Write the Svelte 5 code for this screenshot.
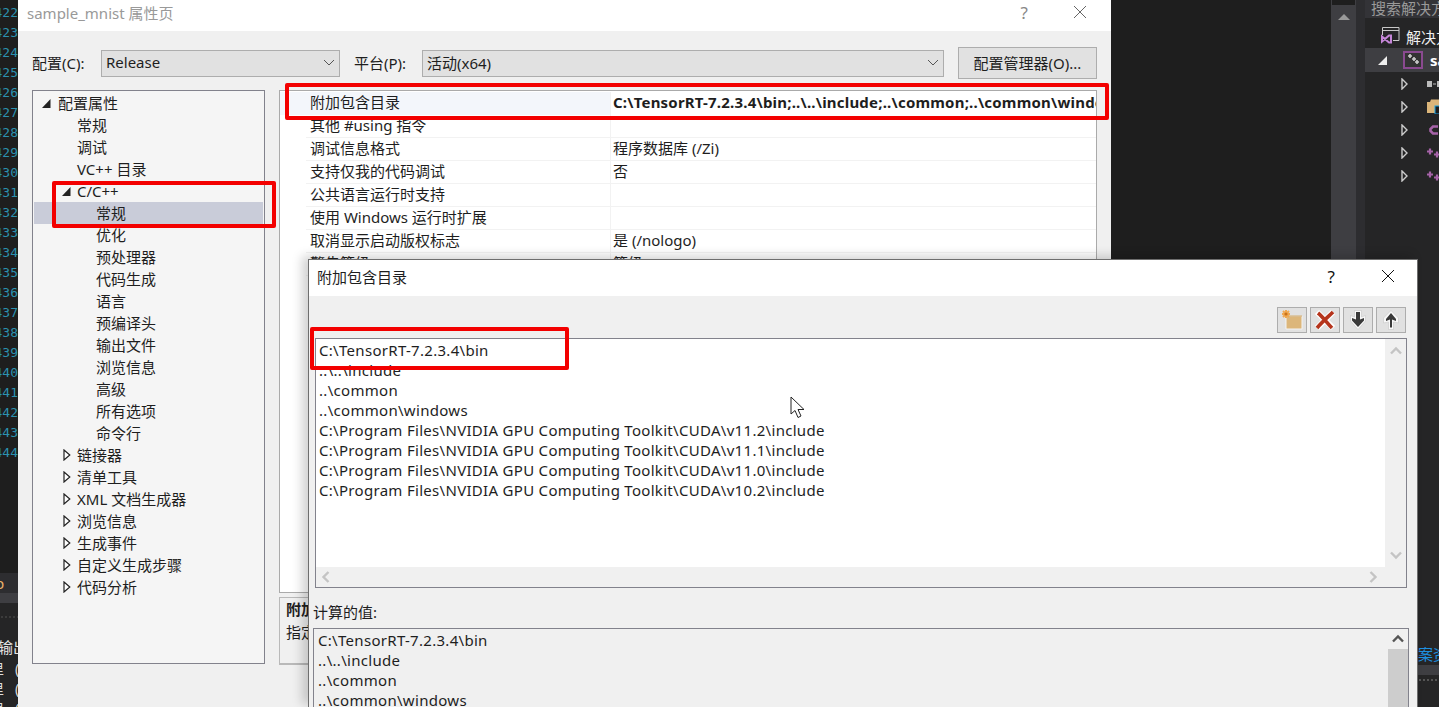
<script lang="ts">
  const lineNumbers = Array.from({ length: 23 }, (_, i) => 422 + i)

  const tree = [
    { label: '配置属性', depth: 0, arrow: 'open' },
    { label: '常规', depth: 1 },
    { label: '调试', depth: 1 },
    { label: 'VC++ 目录', depth: 1 },
    { label: 'C/C++', depth: 1, arrow: 'open' },
    { label: '常规', depth: 2, selected: true },
    { label: '优化', depth: 2 },
    { label: '预处理器', depth: 2 },
    { label: '代码生成', depth: 2 },
    { label: '语言', depth: 2 },
    { label: '预编译头', depth: 2 },
    { label: '输出文件', depth: 2 },
    { label: '浏览信息', depth: 2 },
    { label: '高级', depth: 2 },
    { label: '所有选项', depth: 2 },
    { label: '命令行', depth: 2 },
    { label: '链接器', depth: 1, arrow: 'closed' },
    { label: '清单工具', depth: 1, arrow: 'closed' },
    { label: 'XML 文档生成器', depth: 1, arrow: 'closed' },
    { label: '浏览信息', depth: 1, arrow: 'closed' },
    { label: '生成事件', depth: 1, arrow: 'closed' },
    { label: '自定义生成步骤', depth: 1, arrow: 'closed' },
    { label: '代码分析', depth: 1, arrow: 'closed' }
  ]

  const props = [
    ['附加包含目录', 'C:\\TensorRT-7.2.3.4\\bin;..\\..\\include;..\\common;..\\common\\windows;C:\\Program Files'],
    ['其他 #using 指令', ''],
    ['调试信息格式', '程序数据库 (/Zi)'],
    ['支持仅我的代码调试', '否'],
    ['公共语言运行时支持', ''],
    ['使用 Windows 运行时扩展', ''],
    ['取消显示启动版权标志', '是 (/nologo)'],
    ['警告等级', '等级']
  ]

  const dirs = [
    'C:\\TensorRT-7.2.3.4\\bin',
    '..\\..\\include',
    '..\\common',
    '..\\common\\windows',
    'C:\\Program Files\\NVIDIA GPU Computing Toolkit\\CUDA\\v11.2\\include',
    'C:\\Program Files\\NVIDIA GPU Computing Toolkit\\CUDA\\v11.1\\include',
    'C:\\Program Files\\NVIDIA GPU Computing Toolkit\\CUDA\\v11.0\\include',
    'C:\\Program Files\\NVIDIA GPU Computing Toolkit\\CUDA\\v10.2\\include'
  ]

  const explorerArrows = [0, 1, 2, 3, 4]
</script>

{#snippet chevron(dir, color)}
  <svg class="chev" width="14" height="10" viewBox="0 0 14 10" style="transform: rotate({dir}deg)">
    <path d="M2 7.5 L7 2.5 L12 7.5" fill="none" stroke={color} stroke-width="2.4" />
  </svg>
{/snippet}

<div class="desktop">
  <!-- editor gutter behind the window -->
  <div class="gutter">
    {#each lineNumbers as n}<div>{n}</div>{/each}
  </div>

  <div class="output">
    <div class="out-tab">p</div>
    <div class="out-bar"></div>
    <div class="out-dots"></div>
    <div class="out-title">输出</div>
    <div class="out-line">里&nbsp;&nbsp;&nbsp;(</div>
    <div class="out-line">里&nbsp;&nbsp;&nbsp;(</div>
    <div class="out-line">里&nbsp;&nbsp;&nbsp;(</div>
  </div>

  <!-- solution explorer on the right -->
  <div class="scrollbar">
    <div class="scroll-thumb"></div>
    <svg width="12" height="7" viewBox="0 0 12 7"><path d="M6 0 L12 6 H0 Z" fill="#999" /></svg>
  </div>
  <div class="explorer">
    <div class="search">搜索解决方案资源管理器</div>
    <div class="ex-row">
      <svg width="19" height="18" viewBox="0 0 19 18">
        <path d="M1.5 8 V0.5 H18 V13.5 H12 M1.5 3.5 H18" fill="none" stroke="#c8c8c8" stroke-width="1" />
        <path d="M1 9.5 L8 15.5 H10 V8.5 H8 L1 14.5 Z" fill="none" stroke="#c586d8" stroke-width="2" />
      </svg>
      <span>解决方案</span>
    </div>
    <div class="ex-row project">
      <svg width="9" height="9" viewBox="0 0 9 9"><path d="M9 0 V9 H0 Z" fill="#eee" /></svg>
      <svg class="proj" width="20" height="18" viewBox="0 0 20 18">
        <rect x="1" y="1" width="18" height="16" fill="#333" stroke="#8a4a90" stroke-width="2" />
        <path d="M5 5 H9 M7 3 V7 M9 8 H13 M11 6 V10 M12 11 H16 M14 9 V13" stroke="#ccc" stroke-width="1.6" />
      </svg>
      <b>sample_mnist</b>
    </div>
    {#each explorerArrows as i}
      <div class="ex-child">
        <svg class="ex-arrow" width="7" height="12" viewBox="0 0 7 12"><path d="M1 1 L6 6 L1 11 Z" fill="none" stroke="#ccc" stroke-width="1.4" /></svg>
        {#if i === 0}
          <svg width="16" height="8" viewBox="0 0 16 8"><rect x="0" y="1" width="5" height="6" fill="#bbb" /><rect x="6" y="3.5" width="3" height="1" fill="#bbb" /><rect x="10" y="1" width="5" height="6" fill="#bbb" /></svg>
        {:else if i === 1}
          <svg width="16" height="15" viewBox="0 0 16 15"><path d="M0 3 H3 L4 0.5 H12 L13 3 V14 H0 Z" fill="#dcb67a" /><rect x="8" y="7" width="8" height="8" fill="#1e1e1e" stroke="#1ba1e2" /></svg>
        {:else if i === 2}
          <svg class="icon-c" width="12" height="12" viewBox="0 0 12 12"><path d="M10 2.5 H5 L2.5 5 V7 L5 9.5 H10" fill="none" stroke="#a663a8" stroke-width="2.6" /></svg>
        {:else}
          <svg width="14" height="10" viewBox="0 0 14 10"><path d="M0 3.5 H6 M3 0.5 V6.5 M7 6.5 H13 M10 3.5 V9.5" stroke="#a663a8" stroke-width="2.2" /></svg>
        {/if}
      </div>
    {/each}
  </div>
  <div class="corner-text">案资</div>
  <div class="corner-bar"></div>
  <div class="corner-dots"></div>

  <!-- property pages window -->
  <div class="window main">
    <div class="titlebar">
      <span class="title">sample_mnist 属性页</span>
      <span class="help">?</span>
      <svg class="close" width="14" height="14" viewBox="0 0 14 14"><path d="M1 1 L13 13 M13 1 L1 13" stroke="#666" stroke-width="1" /></svg>
    </div>
    <div class="body">
      <div class="toolbar">
        <label class="config-label" for="cfg">配置(C):</label>
        <div class="select cfg" id="cfg">
          <span>Release</span>
          <svg width="12" height="7" viewBox="0 0 12 7"><path d="M1 1 L6 6 L11 1" fill="none" stroke="#555" /></svg>
        </div>
        <label class="platform-label" for="plat">平台(P):</label>
        <div class="select plat" id="plat">
          <span>活动(x64)</span>
          <svg width="12" height="7" viewBox="0 0 12 7"><path d="M1 1 L6 6 L11 1" fill="none" stroke="#555" /></svg>
        </div>
        <button class="manager">配置管理器(O)...</button>
      </div>

      <div class="panes">
        <div class="tree">
          {#each tree as item}
            <div class="tree-row depth{item.depth}" class:selected={item.selected}>
              {#if item.arrow === 'open'}
                <svg class="arrow" width="9" height="9" viewBox="0 0 9 9"><path d="M8.5 0 V9 H0 Z" fill="#222" /></svg>
              {:else if item.arrow === 'closed'}
                <svg class="arrow closed" width="8" height="12" viewBox="0 0 8 12"><path d="M1 1 L6.8 6 L1 11 Z" fill="#fff" stroke="#222" stroke-width="1.2" /></svg>
              {/if}
              <span>{item.label}</span>
            </div>
          {/each}
        </div>

        <div class="right">
          <div class="grid">
            {#each props as p, i}
              <div class="prop" class:active={i === 0}>
                <div class="name">{p[0]}</div>
                <div class="value" class:bold={i === 0}>{p[1]}</div>
              </div>
            {/each}
          </div>
          <div class="desc">
            <b>附加包含目录</b>
            <div>指定一个或多个要添加到包含路径中的目录</div>
          </div>
        </div>
      </div>
    </div>
  </div>

  <!-- red annotation frames -->
  <div class="mark mark-a"></div>
  <div class="mark mark-b"></div>

  <!-- include directories dialog -->
  <div class="window dialog">
    <div class="dlg-title">
      <span>附加包含目录</span>
      <span class="help">?</span>
      <svg class="close" width="14" height="14" viewBox="0 0 14 14"><path d="M1 1 L13 13 M13 1 L1 13" stroke="#111" stroke-width="1" /></svg>
    </div>
    <div class="dlg-body">
      <div class="dlg-tools">
        <div class="tool">
          <svg width="24" height="22" viewBox="0 0 24 22">
            <path d="M6 7 H22 V20 H6 Z" fill="#dcb67a" stroke="#f4f4f4" />
            <path d="M6 7 H22" stroke="#c9a263" />
            <path d="M6 1 V9 M2 5 H10 M3 2 L9 8 M9 2 L3 8" stroke="#f0a850" stroke-width="2" />
            <circle cx="6" cy="5" r="1.6" fill="#c9721a" />
          </svg>
        </div>
        <div class="tool">
          <svg width="24" height="22" viewBox="0 0 24 22">
            <path d="M4 3 L20 19 M20 3 L4 19" stroke="#fff" stroke-width="6" />
            <path d="M5 4 C10 8 14 14 19 19 M20 3 C15 8 9 13 4 19" fill="none" stroke="#b5341c" stroke-width="3.6" />
          </svg>
        </div>
        <div class="tool">
          <svg width="18" height="20" viewBox="0 0 18 20">
            <path d="M5.5 0.5 H12.5 V7 L16.5 5.5 V11 L9 19.5 L1.5 11 V5.5 L5.5 7 Z" fill="#f8f8f8" stroke="#c8c8c8" stroke-width="0.6" />
            <path d="M7 2 H11 V9.5 L15 8 V10.5 L9 17 L3 10.5 V8 L7 9.5 Z" fill="#3a3a3a" />
          </svg>
        </div>
        <div class="tool">
          <svg width="18" height="20" viewBox="0 0 18 20">
            <path d="M6.5 19.5 H11.5 V12 L16.5 13 V8 L9 0.5 L1.5 8 V13 L6.5 12 Z" fill="#f8f8f8" stroke="#c8c8c8" stroke-width="0.6" />
            <path d="M8 17.5 H10 V9.5 L14 11 V9 L9 3 L4 9 V11 L8 9.5 Z" fill="#3a3a3a" />
          </svg>
        </div>
      </div>

      <div class="listbox">
        <div class="list-main">
          <div class="list-text">
            {#each dirs as d}<div class="line">{d}</div>{/each}
          </div>
          <div class="vbar">
            {@render chevron(0, '#c4c4c4')}
            {@render chevron(180, '#c4c4c4')}
          </div>
        </div>
        <div class="hbar">
          {@render chevron(-90, '#c4c4c4')}
          {@render chevron(90, '#c4c4c4')}
        </div>
      </div>

      <div class="computed-label">计算的值:</div>
      <div class="computed">
        <div class="computed-text">
          {#each dirs.slice(0, 4) as d}<div class="line">{d}</div>{/each}
        </div>
        <div class="vbar2">
          <div class="vbar2-btn">{@render chevron(0, '#555')}</div>
          <div class="vbar2-thumb"></div>
        </div>
      </div>
    </div>
  </div>

  <div class="mark mark-c"></div>

  <!-- mouse pointer -->
  <svg class="cursor" width="16" height="24" viewBox="0 0 16 24">
    <path d="M1 1 V18 L5 14.5 L8 21.5 L11 20 L8 13.5 L14 13.5 Z" fill="#fff" stroke="#222" stroke-width="1" />
  </svg>
</div>

<style>
  :global(body) {
    margin: 0;
    background: #1e1e1e;
  }
  .desktop {
    position: relative;
    width: 1439px;
    height: 707px;
    overflow: hidden;
    background: #1e1e1e;
    font-family: "Noto Sans", "Noto Sans CJK SC", sans-serif;
    font-size: 15px;
    color: #1e1e1e;
  }

  .gutter {
    position: absolute;
    left: 0;
    top: 3px;
    width: 18px;
    font-family: "DejaVu Sans Mono", monospace;
    font-size: 13px;
    line-height: 20px;
    color: #2b91af;
    direction: rtl;
    white-space: nowrap;
    text-align: left;
  }

  .output {
    position: absolute;
    left: 0;
    top: 573px;
    width: 18px;
    height: 134px;
    overflow: hidden;
    color: #ddd;
    background: #252526;
    white-space: nowrap;
  }
  .out-tab { height: 20px; line-height: 20px; background: #2d2d30; margin-left: -6px; padding-left: 1px; color: #e8b06a; }
  .out-bar { height: 10px; background: #3e3e42; }
  .out-dots {
    height: 30px;
    background-image: radial-gradient(#555 0.6px, transparent 0.8px);
    background-size: 4px 4px;
    background-position: 8px 12px;
    background-repeat: repeat-x;
  }
  .out-title { height: 26px; line-height: 28px; margin-left: -2px; color: #e4e4e4; }
  .out-line { height: 20px; line-height: 20px; margin-left: -10px; font-size: 14px; }

  .scrollbar {
    position: absolute;
    left: 1331px;
    top: 0;
    width: 25px;
    height: 707px;
    background: #3e3e42;
    text-align: center;
  }
  .scroll-thumb { height: 5px; background: #1e1e1e; margin: 0 1px 9px; }
  .scrollbar svg { display: block; margin: 0 auto; }

  .explorer {
    position: absolute;
    left: 1356px;
    top: 0;
    width: 83px;
    height: 707px;
    background: #252526;
    border-left: 9px solid #2d2d30;
    box-sizing: border-box;
    overflow: hidden;
    color: #ddd;
    white-space: nowrap;
  }
  .explorer svg { flex: none; }
  .search {
    height: 18px;
    line-height: 16px;
    padding-left: 6px;
    background: #333337;
    color: #999;
  }
  .ex-row { display: flex; align-items: center; gap: 6px; height: 30px; padding: 6px 0 0 16px; box-sizing: border-box; color: #f0f0f0; }
  .ex-row.project { height: 24px; padding: 0 0 0 13px; gap: 16px; background: #3e3e42; color: #fff; }
  .ex-row.project b { margin-left: -9px; }
  .ex-child { display: flex; align-items: center; gap: 19px; height: 23px; padding-left: 36px; }
  .icon-c { margin-left: 1px; }

  .corner-text { position: absolute; left: 1418px; top: 643px; color: #1e90e0; white-space: nowrap; width: 21px; overflow: hidden; }
  .corner-bar { position: absolute; left: 1418px; top: 665px; width: 21px; height: 10px; background: #3e3e42; }
  .corner-dots {
    position: absolute;
    left: 1418px;
    top: 675px;
    width: 21px;
    height: 32px;
    background: #252526 radial-gradient(#555 0.6px, transparent 0.8px) 0 2px / 4px 6px repeat-x;
  }

  .window { position: absolute; box-sizing: border-box; }
  .main {
    left: 18px;
    top: 0;
    width: 1093px;
    height: 707px;
    display: flex;
    flex-direction: column;
    background: #f0f0f0;
  }
  .titlebar {
    display: flex;
    align-items: center;
    box-sizing: border-box;
    height: 31px;
    flex: none;
    padding: 0 24px 7px 9px;
    background: #fff;
  }
  .title { flex: 1; color: #999; }
  .help { font-size: 17px; color: #888; margin-right: 45px; }
  .body { flex: 1; padding: 16px 14px 0; display: flex; flex-direction: column; }

  .toolbar { display: flex; align-items: center; height: 32px; }
  .config-label { width: 69px; padding-bottom: 2px; }
  .platform-label { width: 68px; margin-left: 14px; padding-bottom: 2px; }
  .select {
    display: flex;
    align-items: center;
    justify-content: space-between;
    box-sizing: border-box;
    height: 27px;
    padding: 0 4px 2px;
    background: #e1e1e1;
    border: 1px solid #adadad;
  }
  .select.cfg { width: 239px; }
  .select.plat { width: 522px; }
  .manager {
    width: 139px;
    height: 32px;
    margin-left: 14px;
    font: inherit;
    color: inherit;
    background: #e1e1e1;
    border: 1px solid #adadad;
    padding: 0 0 2px;
  }

  .panes { display: flex; gap: 14px; margin-top: 11px; }
  .tree {
    box-sizing: border-box;
    width: 233px;
    height: 574px;
    padding-top: 1px;
    background: #f5f5f5;
    border: 1px solid #82828c;
  }
  .tree-row {
    position: relative;
    height: 22px;
    line-height: 22px;
    padding-left: 43px;
    margin: 0 1px;
    white-space: nowrap;
  }
  .tree-row.depth0 { padding-left: 24px; }
  .tree-row.depth2 { padding-left: 62px; }
  .tree-row.selected { background: #c9ccd9; }
  .arrow { position: absolute; top: 7px; left: 8px; }
  .depth1 .arrow { left: 28px; }
  .depth1 .arrow.closed { top: 5px; left: 29px; }

  .right { width: 818px; }
  .grid {
    box-sizing: border-box;
    height: 503px;
    padding-top: 1px;
    padding-left: 26px;
    background: #fff;
    border: 1px solid #aaa;
    overflow: hidden;
  }
  .prop {
    display: flex;
    height: 23px;
    line-height: 20px;
    box-sizing: border-box;
    border-bottom: 1px solid #f2f2f2;
    white-space: nowrap;
  }
  .prop.active { background: #f3f6fb; margin-left: -26px; padding-left: 26px; border-bottom: 0; }
  .name { width: 304px; padding-left: 4px; box-sizing: border-box; overflow: hidden; }
  .value { flex: 1; min-width: 0; padding-left: 2px; border-left: 1px solid #f2f2f2; overflow: hidden; }
  .value.bold { font-weight: 700; background: #fff; letter-spacing: 0.2px; }
  .desc {
    box-sizing: border-box;
    height: 68px;
    margin-top: 4px;
    padding: 0 6px;
    line-height: 23px;
    border: 1px solid #b9b9b9;
    border-bottom-width: 2px;
    white-space: nowrap;
    overflow: hidden;
  }

  .mark {
    position: absolute;
    box-sizing: border-box;
    border: 4px solid #f30000;
    border-radius: 2px;
  }
  .mark-a { left: 285px; top: 83px; width: 824px; height: 37px; }
  .mark-b { left: 52px; top: 181px; width: 224px; height: 47px; }
  .mark-c { left: 310px; top: 327px; width: 259px; height: 43px; }

  .dialog {
    left: 308px;
    top: 259px;
    width: 1110px;
    height: 448px;
    display: flex;
    flex-direction: column;
    background: #f0f0f0;
    border: 1px solid #6e6e6e;
    border-bottom: 0;
    box-shadow: -6px -3px 10px rgba(0, 0, 0, 0.18);
  }
  .dlg-title {
    display: flex;
    align-items: center;
    flex: none;
    box-sizing: border-box;
    height: 36px;
    padding: 0 22px 4px 8px;
    background: #fff;
  }
  .dlg-title span:first-child { flex: 1; }
  .dlg-title .help { color: #111; margin-right: 46px; }
  .dlg-body { flex: 1; padding: 0 8px 0 6px; }
  .dlg-tools { display: flex; justify-content: flex-end; gap: 3px; padding: 11px 0 0; height: 31px; margin-right: 3px; }
  .tool {
    display: flex;
    align-items: center;
    justify-content: center;
    box-sizing: border-box;
    width: 30px;
    height: 26px;
    background: #e1e1e1;
    border: 1px solid #adadad;
  }
  .listbox {
    box-sizing: border-box;
    width: 1092px;
    height: 250px;
    border: 1px solid #82828c;
    display: flex;
    flex-direction: column;
    background: #f0f0f0;
  }
  .list-main { display: flex; flex: 1; min-height: 0; }
  .list-text { flex: 1; padding: 1px 3px 3px; background: #fff; }
  .line { height: 20px; line-height: 20px; white-space: nowrap; letter-spacing: 0.3px; }
  .vbar {
    width: 21px;
    display: flex;
    flex-direction: column;
    justify-content: space-between;
    align-items: center;
    padding: 7px 0;
  }
  .hbar {
    height: 20px;
    display: flex;
    align-items: center;
    justify-content: space-between;
    padding: 0 26px 0 3px;
  }
  .chev { display: block; }

  .computed-label { margin: 15px 0 0 -2px; height: 25px; line-height: 18px; }
  .computed {
    box-sizing: border-box;
    width: 1096px;
    height: 90px;
    margin-left: -2px;
    padding: 1px 0 0 4px;
    border: 1px solid #82828c;
    display: flex;
  }
  .computed-text { flex: 1; }
  .vbar2 { width: 20px; margin-top: -1px; }
  .vbar2-btn { height: 20px; display: flex; align-items: center; justify-content: center; }
  .vbar2-thumb { height: 70px; background: #cdcdcd; }

  .cursor { position: absolute; left: 790px; top: 396px; }
</style>
